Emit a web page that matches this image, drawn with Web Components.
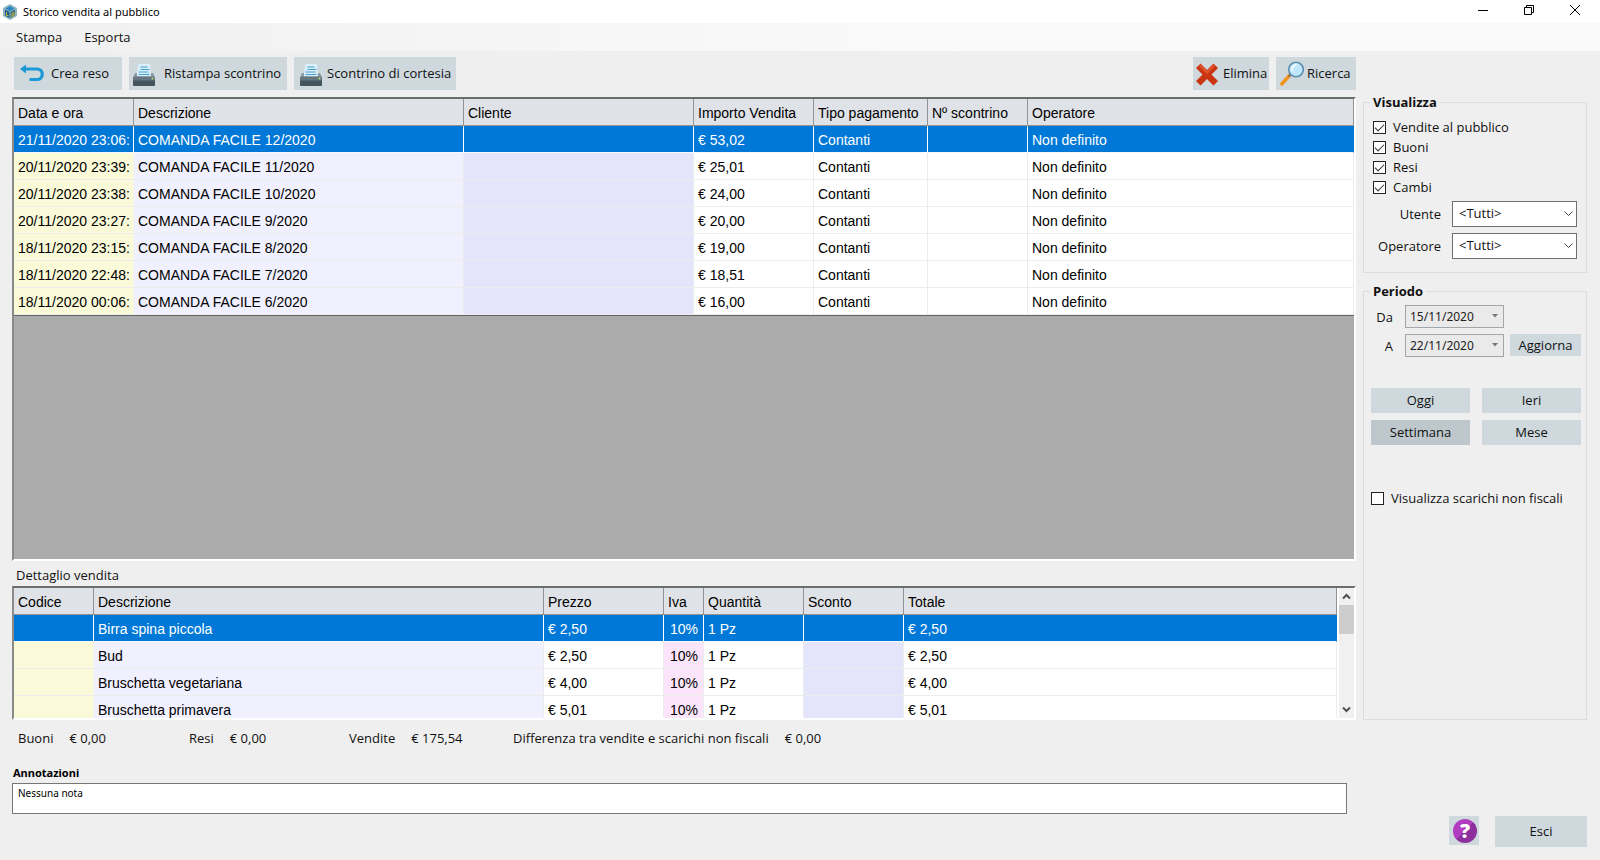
<!DOCTYPE html>
<html lang="it">
<head>
<meta charset="utf-8">
<title>Storico vendita al pubblico</title>
<style>
  html, body { margin: 0; padding: 0; }
  body { background: #efefef; color: #111; font: 13px/20px "Open Sans", "Noto Sans", sans-serif; }
</style>
</head>
<body>
<sales-window></sales-window>

<script>
const ICONS = {
  app: `<svg width="14" height="16" viewBox="0 0 14 16"><path d="M7 0l7 4v8l-7 4-7-4V4z" fill="#8fb4c0"/><path d="M7 2l4.500 2.600L7 7.200 2.500 4.600z" fill="#2c86c4"/><path d="M2 5.500L6.500 8v6l-4.500-2.600z" fill="#1d5d8c"/><path d="M12 5.500L7.500 8v6l4.500-2.600z" fill="#2f6f7c"/><path d="M3.500 8v3.500h2M9 9.500l2-1v3l-2 1z" stroke="#c9b93a" fill="none"/></svg>`,
  undo: `<svg width="24" height="18" viewBox="0 0 24 18"><path d="M4 5h13c7 0 7 10.500 0 10.500h-7.500" fill="none" stroke="#1b9ad8" stroke-width="3.200"/><path d="M6 .5v9L0 5z" fill="#1b9ad8"/></svg>`,
  printer: `<svg width="24" height="28" viewBox="0 -4 24 28"><path d="M6.500 1H18l1 13H4z" fill="#d9effa"/><path d="M8.500 4h7M8.500 6.500h9M6.500 9h10M6.500 11.500h11" stroke="#4a9fd0" stroke-width="1.200"/><path d="M3 10h2v3.500h14V10h2l2 4.500H1z" fill="#8a9aa2"/><rect x="1" y="13.500" width="22" height="9.500" rx="1.500" fill="#647680"/><path d="M1 17.500h22V21.500a1.500 1.500 0 0 1-1.500 1.500h-19A1.500 1.500 0 0 1 1 21.500z" fill="#44545d"/><circle cx="20.500" cy="15.500" r="1" fill="#b8e36a"/></svg>`,
  cross: `<svg width="22" height="25" viewBox="0 -2 22 25"><path d="M4.500.5L11 7 17.500.5 22 5l-6.500 6.500L22 18l-4.500 4.500L11 16l-6.500 6.500L0 18l6.500-6.500L0 5z" fill="#c93510"/><path d="M4.500 1.500L11 8l6.500-6.500L19 3l-8 8-8-8z" fill="#e2542c"/></svg>`,
  lens: `<svg width="24" height="25" viewBox="0 0 24 25"><path d="M9.500 14.500L1.800 23" stroke="#f0941d" stroke-width="3.400" stroke-linecap="round"/><path d="M8.500 15.500l2-2" stroke="#8b6f5a" stroke-width="2"/><circle cx="16" cy="8.500" r="7.300" fill="#bfe6fa" stroke="#5d8fae" stroke-width="1.600"/><path d="M11 8a5 5 0 0 1 7-4.500c-3 1-5 3-5.500 7.500A5 5 0 0 1 11 8z" fill="#eefaff"/></svg>`,
  minimize: `<svg width="10" height="10" viewBox="0 0 10 10"><path d="M0 5.500h10" stroke="#000"/></svg>`,
  restore: `<svg width="10" height="10" viewBox="0 0 10 10"><path d="M.5 2.500h7v7h-7zM2.500 2.500v-2h7v7h-2" fill="none" stroke="#000"/></svg>`,
  close: `<svg width="10" height="10" viewBox="0 0 10 10"><path d="M0 0l10 10M10 0L0 10" stroke="#000"/></svg>`,
  up: `<svg width="9" height="7" viewBox="0 0 9 7"><path d="M1 5.500l3.500-3.500L8 5.500" fill="none" stroke="#505050" stroke-width="2"/></svg>`,
  down: `<svg width="9" height="7" viewBox="0 0 9 7"><path d="M1 1.500L4.500 5 8 1.500" fill="none" stroke="#505050" stroke-width="2"/></svg>`,
  chevron: `<svg width="9" height="6" viewBox="0 0 9 6"><path d="M.5.5l4 4 4-4" fill="none" stroke="#444"/></svg>`,
  caret: `<svg width="6" height="4" viewBox="0 0 6 4"><path d="M0 0h6L3 3.500z" fill="#777"/></svg>`
};

function define(name, css, render) {
  customElements.define(name, class extends HTMLElement {
    connectedCallback() {
      if (this.shadowRoot) return;
      const root = this.attachShadow({ mode: 'open' });
      root.innerHTML = `<style>*{box-sizing:border-box}${css}</style>${render(this)}`;
    }
  });
}

define('app-icon', `:host{display:inline-flex}svg{display:block}`,
  el => ICONS[el.getAttribute('name')]);

define('title-bar', `
  :host{display:flex;align-items:center;height:23px;background:#fff;padding:0 2px 0 3px}
  h1{flex:1;margin:0 0 0 6px;font:400 11px/20px "Noto Sans",sans-serif;color:#000}
  button{width:46px;height:23px;padding:0 0 3px;border:0;background:none;display:flex;align-items:center;justify-content:center}
`, () => `<app-icon name="app"></app-icon><h1><slot></slot></h1>
  <button aria-label="Riduci a icona"><app-icon name="minimize"></app-icon></button>
  <button aria-label="Ripristina"><app-icon name="restore"></app-icon></button>
  <button aria-label="Chiudi"><app-icon name="close"></app-icon></button>`);

define('menu-bar', `
  :host{display:block;background:linear-gradient(90deg,#f0f0f0,#fafafa 60%)}
  nav{display:flex;gap:22px;padding:4px 16px;height:28px}
  button{border:0;padding:0;background:none;font:inherit;color:inherit}
`, () => `<nav><button>Stampa</button><button>Esporta</button></nav>`);

define('flat-button', `
  :host{display:block}
  button{width:100%;height:100%;border:0;background:#ced8dd;font:inherit;color:#111;padding:0 var(--pad-right,0px) 1px var(--pad,0px);
    display:flex;align-items:center;justify-content:var(--justify,center);gap:var(--gap,0px);white-space:nowrap}
  :host([active]) button{background:#bdc7cc}
`, el => `<button ${el.getAttribute('label') ? `aria-label="${el.getAttribute('label')}"` : ''}>
  ${el.hasAttribute('icon') ? `<app-icon name="${el.getAttribute('icon')}"></app-icon>` : ''}<slot></slot></button>`);

define('tool-bar', `
  :host{display:flex;gap:7px;padding:6px 0 7px 2px}
  flat-button{height:33px;--justify:flex-start;--pad:6px}
  .undo{width:108px;--gap:7px}
  .print{width:158px;--pad:3px;--gap:8px}
  .gift{width:162px;--pad:5px;--gap:4px}
  .del{width:76px;margin-left:auto;--pad:3px;--gap:5px}
  .find{width:80px;--pad:4px;--gap:3px}
`, () => `
  <flat-button class="undo" icon="undo">Crea reso</flat-button>
  <flat-button class="print" icon="printer">Ristampa scontrino</flat-button>
  <flat-button class="gift" icon="printer">Scontrino di cortesia</flat-button>
  <flat-button class="del" icon="cross">Elimina</flat-button>
  <flat-button class="find" icon="lens">Ricerca</flat-button>`);

const GRIDS = {
  sales: {
    columns: [['Data e ora', 120, 'y'], ['Descrizione', 330, 'l'], ['Cliente', 230, 'v'], ['Importo Vendita', 120], ['Tipo pagamento', 114], ['Nº scontrino', 100], ['Operatore', 0]],
    rows: [['21/11/2020 23:06:', 12, '53,02'], ['20/11/2020 23:39:', 11, '25,01'], ['20/11/2020 23:38:', 10, '24,00'], ['20/11/2020 23:27:', 9, '20,00'],
      ['18/11/2020 23:15:', 8, '19,00'], ['18/11/2020 22:48:', 7, '18,51'], ['18/11/2020 00:06:', 6, '16,00']]
      .map(([d, n, v]) => [d, `COMANDA FACILE ${n}/2020`, '', `€ ${v}`, 'Contanti', '', 'Non definito'])
  },
  detail: {
    columns: [['Codice', 80, 'y'], ['Descrizione', 450, 'l'], ['Prezzo', 120], ['Iva', 40, 'p'], ['Quantità', 100], ['Sconto', 100, 'v'], ['Totale', 0]],
    rows: [['Birra spina piccola', '2,50'], ['Bud', '2,50'], ['Bruschetta vegetariana', '4,00'], ['Bruschetta primavera', '5,01']]
      .map(([d, v]) => ['', d, `€ ${v}`, '10%', '1 Pz', '', `€ ${v}`])
  }
};

define('data-grid', `
  :host{display:flex;align-items:stretch;overflow:hidden;background:#ababab;border:2px solid;border-color:#6d6d6d #fff #fff #8a8a8a;min-height:0}
  .view{flex:1;min-width:0;overflow:hidden}
  table{width:100%;table-layout:fixed;border-collapse:separate;border-spacing:0;font:14px/20px "Liberation Sans",Arial,sans-serif;color:#000;border-bottom:1px solid #666}
  th,td{height:27px;padding:1px 0 0 4px;text-align:left;font-weight:400;white-space:nowrap;overflow:hidden;border-right:1px solid #ececf0;border-bottom:1px solid #ececec}
  th{background:#dfe2e7;border-color:#929292}
  td{background:#fff}
  td.y{background:#fafad8;border-right-color:#f4f4ea}
  td.l{background:#f0f0ff}
  td.v{background:#e4e5fa}
  td.p{background:#fce4fa;padding-left:6px}
  tr.sel td{background:#0078d7;color:#fff;border-right-color:#fff;border-bottom-color:#f4f8ff}
  tr.sel td:last-child{border-right-color:#0078d7}
  .bar{width:17px;background:#f0f0f0;border-left:2px solid #fff;display:flex;flex-direction:column}
  .bar button{height:17px;border:0;padding:0;background:none;display:flex;align-items:center;justify-content:center}
  .thumb{height:29px;background:#cdcdcd}
  .track{flex:1}
`, el => {
  const g = GRIDS[el.getAttribute('source')];
  return `<div class="view"><table>
    <colgroup>${g.columns.map(c => `<col${c[1] ? ` style="width:${c[1]}px"` : ''}>`).join('')}</colgroup>
    <thead><tr>${g.columns.map(c => `<th scope="col">${c[0]}</th>`).join('')}</tr></thead>
    <tbody>${g.rows.map((r, i) => `<tr${i ? '' : ' class="sel"'}>${r.map((t, j) => `<td class="${g.columns[j][2] || ''}">${t}</td>`).join('')}</tr>`).join('')}</tbody>
  </table></div>${el.hasAttribute('scrollbar') ? `<div class="bar"><button aria-label="Su"><app-icon name="up"></app-icon></button><div class="thumb"></div><div class="track"></div><button aria-label="Giù"><app-icon name="down"></app-icon></button></div>` : ''}`;
});

define('check-option', `
  :host{display:block}
  label{display:flex;align-items:center;gap:7px;height:20px;white-space:nowrap}
  input{appearance:none;margin:0;width:13px;height:13px;border:1px solid #222;background:#fff;display:grid;place-items:center}
  input:checked::before{content:"";width:8px;height:4px;border:solid #333;border-width:0 0 1px 1px;transform:translateY(-1px) rotate(-45deg)}
`, el => `<label><input type="checkbox" ${el.hasAttribute('checked') ? 'checked' : ''}><slot></slot></label>`);

define('select-field', `
  :host{display:block}
  label{display:grid;grid-template-columns:1fr 125px;column-gap:11px;align-items:center;text-align:right}
  .box{display:grid;align-items:center}
  select,app-icon{grid-area:1/1}
  select{appearance:none;width:100%;height:26px;margin:0;padding:0 6px 2px;border:1px solid #6f6f6f;border-radius:0;background:#fff;font:inherit;color:#111}
  app-icon{justify-self:end;margin-right:4px;pointer-events:none}
`, el => `<label><span>${el.getAttribute('label')}</span><span class="box"><select><option>&lt;Tutti&gt;</option></select><app-icon name="chevron"></app-icon></span></label>`);

define('date-field', `
  :host{display:block}
  label{display:grid;grid-template-columns:22px 99px;column-gap:12px;align-items:center;text-align:right}
  .box{display:grid;align-items:center}
  input,app-icon{grid-area:1/1}
  input{width:100%;height:23px;margin:0;padding:0 4px;border:1px solid #a0a6aa;background:#eaeaea;font:12px/20px "Noto Sans",sans-serif;color:#222}
  app-icon{justify-self:end;margin-right:6px;margin-bottom:2px;pointer-events:none}
`, el => `<label><span>${el.getAttribute('label')}</span><span class="box"><input type="text" value="${el.getAttribute('value')}"><app-icon name="caret"></app-icon></span></label>`);

define('group-box', `
  :host{display:block}
  fieldset{height:100%;margin:0;padding:0;border:1px solid #dcdcdc;min-width:0}
  legend{margin-left:6px;padding:0 3px;font-weight:700;line-height:16px;height:16px;font-size:13px}
`, el => `<fieldset><legend>${el.getAttribute('heading')}</legend><slot></slot></fieldset>`);

define('filter-panel', `
  :host{display:flex;flex-direction:column;gap:10px;width:224px}
  .checks{padding:7px 0 0 9px}
  .fields{display:grid;gap:6px;padding:4px 9px 13px 8px}
  .period{flex:1}
  .dates{display:grid;grid-template-columns:133px 71px;gap:6px;padding:6px 0 0 7px;align-items:start}
  .dates date-field{grid-column:1}
  .dates flat-button{height:22px}
  .ranges{display:grid;grid-template-columns:99px 99px;gap:7px 12px;padding:31px 0 0 7px}
  .ranges flat-button{height:25px}
  .fiscal{padding:43px 0 0 7px}
`, () => `
  <group-box heading="Visualizza">
    <div class="checks"><check-option checked>Vendite al pubblico</check-option><check-option checked>Buoni</check-option><check-option checked>Resi</check-option><check-option checked>Cambi</check-option></div>
    <div class="fields"><select-field label="Utente"></select-field><select-field label="Operatore"></select-field></div>
  </group-box>
  <group-box class="period" heading="Periodo">
    <div class="dates"><date-field label="Da" value="15/11/2020"></date-field><date-field label="A" value="22/11/2020"></date-field><flat-button>Aggiorna</flat-button></div>
    <div class="ranges"><flat-button>Oggi</flat-button><flat-button>Ieri</flat-button><flat-button active>Settimana</flat-button><flat-button>Mese</flat-button></div>
    <div class="fiscal"><check-option>Visualizza scarichi non fiscali</check-option></div>
  </group-box>`);

define('totals-row', `
  :host{display:block}
  dl{display:flex;margin:0;padding:8px 6px 0;white-space:nowrap}
  div{display:flex;gap:16px}
  .a{width:171px}.b{width:160px}.c{width:164px}
  dd{margin:0}
`, () => `<dl><div class="a"><dt>Buoni</dt><dd>€ 0,00</dd></div><div class="b"><dt>Resi</dt><dd>€ 0,00</dd></div><div class="c"><dt>Vendite</dt><dd>€ 175,54</dd></div><div><dt>Differenza tra vendite e scarichi non fiscali</dt><dd>€ 0,00</dd></div></dl>`);

define('notes-field', `
  :host{display:block}
  label{display:block;font:700 11px/16px "Noto Sans",sans-serif;padding-left:1px;color:#000}
  textarea{display:block;width:100%;height:31px;margin:2px 0 0;padding:1px 5px;border:1px solid #777;border-radius:0;background:#fff;font:10px/16px "Noto Sans",sans-serif;color:#000;resize:none;overflow:hidden}
`, () => `<label for="n">Annotazioni</label><textarea id="n">Nessuna nota</textarea>`);

define('help-button', `
  :host{display:block}
  button{width:30px;height:29px;border:0;padding:0 0 0 2px;background:#ced8dd;display:grid;place-items:center}
  span{width:24px;height:24px;border-radius:50%;background:linear-gradient(135deg,#b23cc0 50%,#8e2f9e 50%);color:#fff;font:800 20px/24px "Open Sans",sans-serif}
`, () => `<button aria-label="Aiuto"><span>?</span></button>`);

define('sales-window', `
  :host{display:flex;flex-direction:column;min-height:100vh}
  main{flex:1;display:grid;grid-template-columns:minmax(0,1fr) 224px;grid-template-rows:1fr auto;column-gap:7px;padding:0 13px 0 12px}
  .left{display:flex;flex-direction:column;min-width:0}
  .sales{flex:1}
  h2{margin:0;padding:4px 4px 0;font-size:13px;line-height:20px;font-weight:400}
  .detail{height:134px;margin-top:1px}
  filter-panel{margin-top:43px}
  .under{display:flex;flex-direction:column}
  notes-field{margin:17px 9px 0 0}
  footer{display:flex;justify-content:flex-end;gap:16px;padding:2px 13px 13px}
  .exit{width:92px;height:31px}
`, () => `
  <title-bar>Storico vendita al pubblico</title-bar>
  <menu-bar></menu-bar>
  <main>
    <div class="left">
      <tool-bar></tool-bar>
      <data-grid class="sales" source="sales"></data-grid>
      <h2>Dettaglio vendita</h2>
      <data-grid class="detail" source="detail" scrollbar></data-grid>
    </div>
    <filter-panel></filter-panel>
    <div class="under"><totals-row></totals-row><notes-field></notes-field></div>
  </main>
  <footer><help-button></help-button><flat-button class="exit">Esci</flat-button></footer>`);
</script>
</body>
</html>
